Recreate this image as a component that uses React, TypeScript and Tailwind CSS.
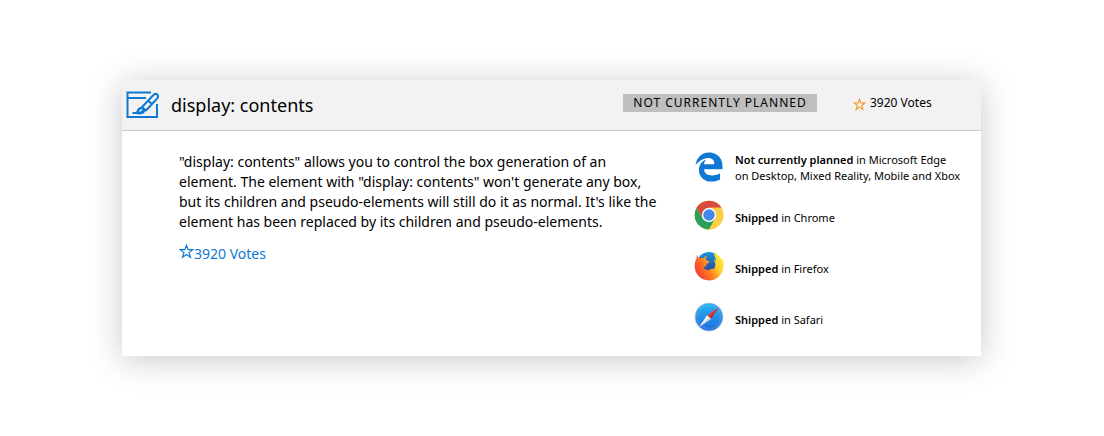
import React from "react";
import { FaEdgeLegacy } from "react-icons/fa6";

const DesignIcon = () => (
    <svg viewBox="0 0 33 28" className="h-7 w-[33px] shrink-0" fill="none" stroke="#0f78d4" strokeWidth="2" aria-hidden="true">
        <path d="M25 1.500H1.500V26H31V13" />
        <path d="M2 7H20" />
        <path d="M16 16L27 4.500C28.300 3 30 2.500 31.300 3.600C32.500 5 32 6.500 31 7.700L20 19.500" />
        <path d="M15.500 15.500L20.500 20M22 9.500L26.500 13.500" />
        <path d="M7 22C11 22 10.300 19.500 12 17.500C13.500 15.500 16.500 15.500 18.300 17.300C20 19.500 19 22 16.500 23C13 24 9.500 23 7 22Z" fill="#0f78d4" stroke="none" />
        <path d="M13.500 20.500L16 18.300" stroke="#f2f2f2" strokeWidth="1.500" />
        <path d="M6.500 22H13" />
    </svg>
);

const Star = ({ className }: { className: string }) => (
    <svg viewBox="0 0 16 16" className={className} fill="none" stroke="currentColor" strokeWidth="1.300" aria-hidden="true">
        <path d="M8 1.500L9.700 6.100H14.700L10.700 9.200L12.200 14.200L8 11.200L3.800 14.200L5.300 9.200L1.300 6.100H6.300Z" />
    </svg>
);

const ChromeIcon = () => (
    <svg viewBox="0 0 48 48" className="size-[30px]" aria-hidden="true">
        <circle cx="24" cy="24" r="23" fill="#fcc934" />
        <path d="M24 24L14.500 29.500L4.100 12.500A23 23 0 0 1 43.900 12.500H24Z" fill="#d94b3e" />
        <path d="M4.100 12.500A23 23 0 0 0 24 47L33.900 29.500L24 24L14.100 29.500Z" fill="#2aa05a" />
        <path d="M24 12.500H43.900A23 23 0 0 1 24 47L33.900 29.500Z" fill="#fdce41" />
        <circle cx="24" cy="24" r="11.500" fill="#fff" />
        <circle cx="24" cy="24" r="9.200" fill="#4587ed" />
    </svg>
);

const FirefoxIcon = () => (
    <svg viewBox="0 0 48 48" className="size-[30px]" aria-hidden="true">
        <defs>
            <linearGradient id="fox" x1="1" y1="0.2" x2="0" y2="0.8">
                <stop offset="0" stopColor="#fff14a" />
                <stop offset="0.3" stopColor="#ffd02b" />
                <stop offset="0.6" stopColor="#ff7a1f" />
                <stop offset="1" stopColor="#f5303c" />
            </linearGradient>
            <linearGradient id="globe" x1="0.5" y1="0" x2="0.5" y2="1">
                <stop offset="0" stopColor="#1a94dc" />
                <stop offset="1" stopColor="#2b348f" />
            </linearGradient>
        </defs>
        <circle cx="24" cy="21" r="19.500" fill="url(#globe)" />
        <path d="M5 6C5.500 8.500 7 10.500 8.500 12C10.500 11 13 11 15 11.500C16.500 9.500 18 8.500 20.500 8C19 10 18.500 12 19 14C20.500 15.500 22.500 16 24.500 16.500C24.500 19 21.500 19.500 20 21C19.500 22.500 20 24 19.500 25C18 24.500 16.500 25 15.500 26C17 30 22 31.500 25.500 29.500C27.500 28.500 29 28 31 29C33.500 27 35 22 33.500 18C33 16 32 14.500 30.500 13C32.500 13.500 34 14.500 35.500 16C34.500 11 31.500 7 32.500 1C35 5 41 8 44.500 14C45 13 45 12 44.800 11C48 17 48.500 25 45.500 32C42 41 34 47 24.500 47C12 47 2 38 1.200 26C1 19 2 15 4 12.500C4 10 4 8 5 6Z" fill="url(#fox)" />
    </svg>
);

const SafariIcon = () => (
    <svg viewBox="0 0 48 48" className="size-[30px]" aria-hidden="true">
        <defs>
            <linearGradient id="dial" x1="0.5" y1="0" x2="0.5" y2="1">
                <stop offset="0" stopColor="#25b4f2" />
                <stop offset="1" stopColor="#216bdc" />
            </linearGradient>
        </defs>
        <circle cx="24" cy="24" r="23" fill="#b4c6da" />
        <circle cx="24" cy="24" r="21.500" fill="url(#dial)" />
        <circle cx="24" cy="24" r="18.500" fill="none" stroke="#fff" strokeOpacity="0.4" strokeWidth="2.500" strokeDasharray="0.8 2.430" />
        <path d="M39.500 8.500L21 21L27 27Z" fill="#e5403b" />
        <path d="M39.500 8.500L24 24L27 27Z" fill="#b92d35" />
        <path d="M8.500 39.500L21 21L27 27Z" fill="#fff" />
        <path d="M8.500 39.500L24 24L27 27Z" fill="#cfd5de" />
    </svg>
);

const browsers = [
    { name: "Chrome", icon: <ChromeIcon /> },
    { name: "Firefox", icon: <FirefoxIcon /> },
    { name: "Safari", icon: <SafariIcon /> },
];

const App = () => {
    return (
        <div className="bg-white pt-20 pb-20 pl-[122px] pr-[123px] font-['Noto_Sans','Open_Sans',sans-serif] text-black">
            <article className="bg-white shadow-[0_4px_32px_rgba(0,0,0,0.22)]">
                <header className="flex h-[51px] items-center border-b border-[#ccc] bg-[#f2f2f2] pl-1">
                    <DesignIcon />
                    <h1 className="ml-3 flex-1 text-[18px] leading-6">display: contents</h1>
                    <div className="flex items-center pb-1">
                        <p className="w-[194px] bg-[#bfbfbf] text-center text-[12px] leading-[18px] tracking-[1px]">NOT CURRENTLY PLANNED</p>
                        <p className="ml-9 flex w-[128px] items-center gap-1 text-[12px] leading-4">
                            <Star className="mt-0.5 size-[13px] text-[#f7941e]" />
                            3920 Votes
                        </p>
                    </div>
                </header>
                <div className="flex justify-between pt-[21px] pb-6 pl-[57px] pr-2">
                    <div className="w-[484px]">
                        <p className="text-[14px] leading-5">
                            "display: contents" allows you to control the box generation of an
                            element. The element with "display: contents" won't generate any box,
                            but its children and pseudo-elements will still do it as normal. It's like the
                            element has been replaced by its children and pseudo-elements.
                        </p>
                        <a href="#" className="mt-3 flex w-fit items-start text-[14px] leading-5 text-[#0f78d4]">
                            <Star className="size-[15px]" />
                            3920 Votes
                        </a>
                    </div>
                    <ul className="w-[279px] text-[11px] leading-4">
                        <li className="flex h-[48px] gap-[11px]">
                            <FaEdgeLegacy className="size-[30px] shrink-0 text-[#0f78d4]" />
                            <p>
                                <b className="font-semibold">Not currently planned</b> in Microsoft Edge
                                <br />
                                on Desktop, Mixed Reality, Mobile and Xbox
                            </p>
                        </li>
                        {browsers.map((b) => (
                            <li key={b.name} className="mb-[21px] flex items-center gap-[11px] last:mb-0">
                                {b.icon}
                                <p className="pt-1.5"><b className="font-semibold">Shipped</b> in {b.name}</p>
                            </li>
                        ))}
                    </ul>
                </div>
            </article>
        </div>
    );
};

export default App;
